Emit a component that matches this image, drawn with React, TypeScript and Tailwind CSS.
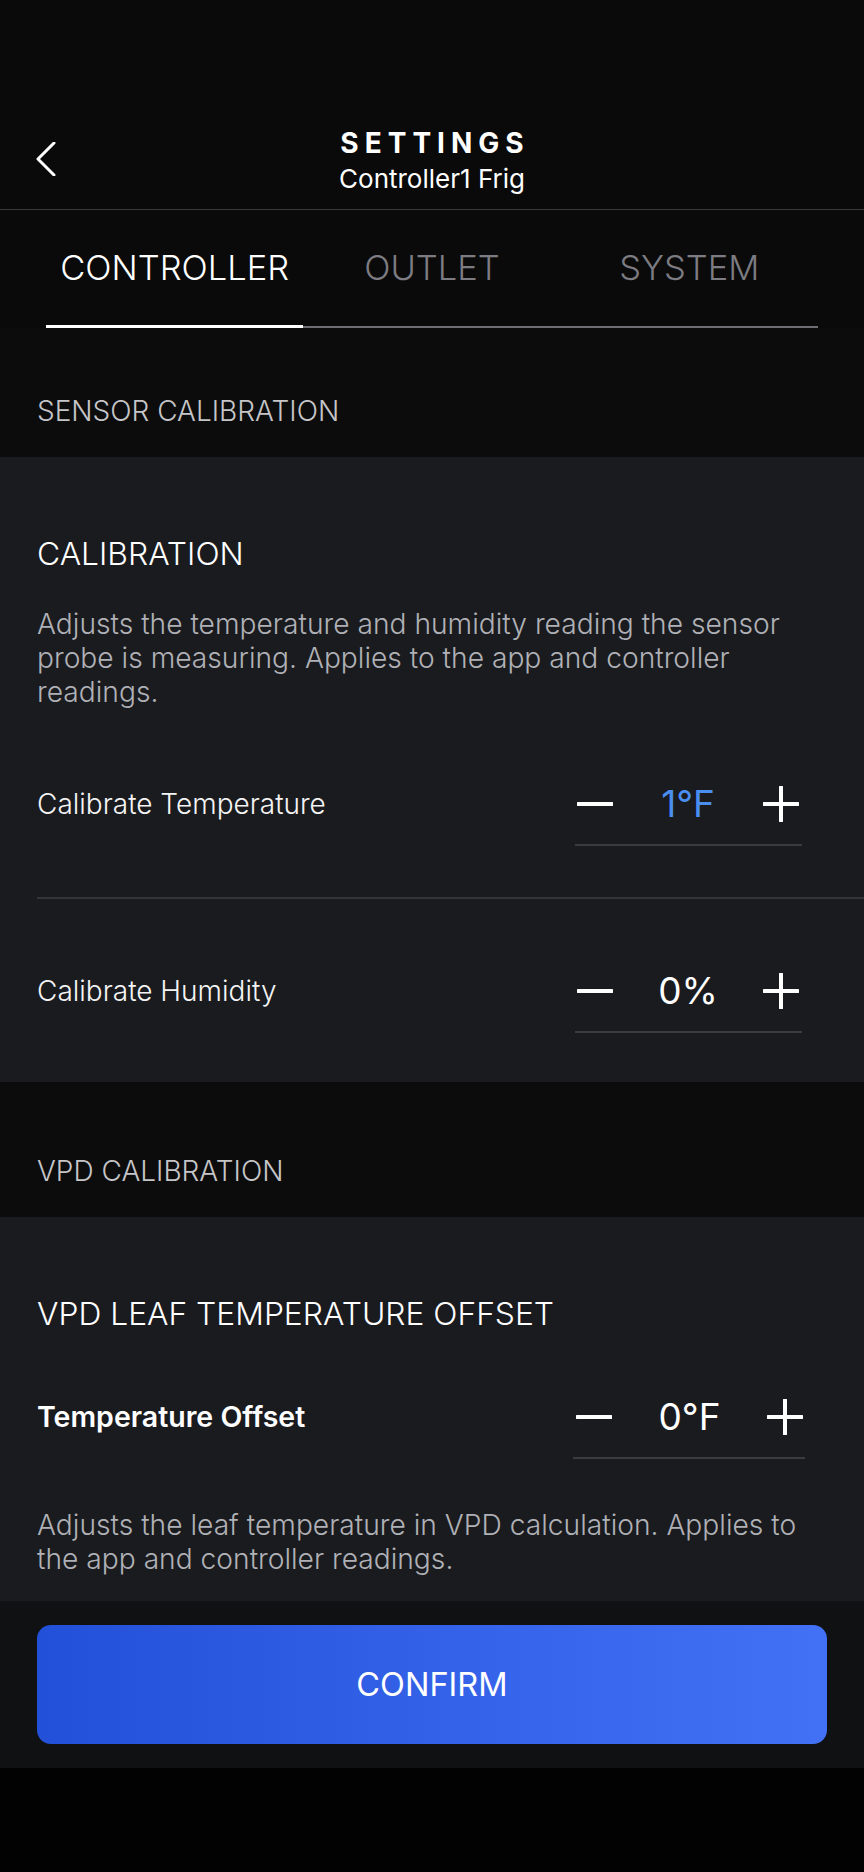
import React from "react";

function Minus() {
  return (
    <svg width="36" height="36" viewBox="0 0 36 36" className="block">
      <line x1="1" y1="18" x2="35" y2="18" stroke="#ffffff" strokeWidth="4" strokeLinecap="round" />
    </svg>
  );
}

function Plus() {
  return (
    <svg width="36" height="36" viewBox="0 0 36 36" className="block">
      <line x1="1" y1="18" x2="35" y2="18" stroke="#ffffff" strokeWidth="4" strokeLinecap="round" />
      <line x1="18" y1="1" x2="18" y2="35" stroke="#ffffff" strokeWidth="4" strokeLinecap="round" />
    </svg>
  );
}

function Stepper({ value, blue, wide }: { value: string; blue?: boolean; wide?: boolean }) {
  return (
    <div className={wide ? "w-[232px] mr-[59px] pb-[20px] border-b-2 border-[#3a3b40]" : "w-[227px] mr-[62px] pb-[20px] border-b-2 border-[#3a3b40]"}>
      <div className={wide ? "flex h-[40px] items-center justify-between pl-[3px] pr-[2px]" : "flex h-[40px] items-center justify-between pl-[2px] pr-[3px]"}>
        <Minus />
        <span
          className={
            blue
              ? "text-[37px] leading-[40px] font-normal text-[#4a8ef0]"
              : "text-[37px] leading-[40px] font-normal text-white"
          }
        >
          {value}
        </span>
        <Plus />
      </div>
    </div>
  );
}

function Row({ label, value, blue, bold, wide }: { label: string; value: string; blue?: boolean; bold?: boolean; wide?: boolean }) {
  return (
    <div className="flex items-start justify-between">
      <span
        className={
          bold
            ? "pl-[37px] text-[28.5px] leading-[40px] font-semibold text-white"
            : "pl-[37px] text-[28px] leading-[40px] font-light text-[#f4f4f4]"
        }
      >
        {label}
      </span>
      <Stepper value={value} blue={blue} wide={wide} />
    </div>
  );
}

export default function App() {
  return (
    <div
      className="w-full min-h-[1872px] bg-[#020202] flex flex-col"
      style={{ fontFamily: "Inter, 'Noto Sans', sans-serif" }}
    >
      {/* Header */}
      <div className="bg-[#0a0a0a]">
        <div className="grid grid-cols-[1fr_auto_1fr] items-center pt-[125px] pb-[12px]">
          <div className="pl-[36px] mb-[4px]">
            <svg width="20" height="34" viewBox="0 0 20 34" className="block">
              <polyline points="18,1 2,17 18,33" fill="none" stroke="#ffffff" strokeWidth="3" strokeLinecap="round" strokeLinejoin="round" />
            </svg>
          </div>
          <div className="flex flex-col items-center">
            <span className="text-[28px] leading-[36px] font-bold tracking-[6px] pl-[6px] text-white">SETTINGS</span>
            <span className="text-[26px] leading-[36px] font-normal text-white">Controller1 Frig</span>
          </div>
          <div />
        </div>
        <div className="h-px bg-[#3a3a3c]" />
        {/* Tabs */}
        <div className="mx-[46px] pt-[38px]">
          <div className="flex pb-[37px]">
            <span className="flex-1 text-center text-[34.5px] leading-[40px] font-light text-white">CONTROLLER</span>
            <span className="flex-1 text-center text-[34.5px] leading-[40px] font-light text-[#7c7c82]">OUTLET</span>
            <span className="flex-1 text-center text-[34.5px] leading-[40px] font-light text-[#7c7c82]">SYSTEM</span>
          </div>
          <div className="flex items-end h-[3px]">
            <div className="flex-1 h-[3px] bg-white" />
            <div className="flex-[2] h-[2px] bg-[#6e6e74]" />
          </div>
        </div>
      </div>

      {/* Section header 1 */}
      <div className="bg-[#0c0c0d] px-[37px] pt-[67px] pb-[30px]">
        <span className="block text-[28px] leading-[32px] font-light text-[#c6c6c8]">SENSOR CALIBRATION</span>
      </div>

      {/* Card 1 */}
      <div className="bg-[#1a1b1f] pt-[77px] pb-[49px]">
        <div className="px-[37px]">
          <div className="text-[31.8px] leading-[40px] font-light text-white">CALIBRATION</div>
          <p className="mt-[33px] text-[28.2px] leading-[34px] font-light text-[#b0b1b6]">
            Adjusts the temperature and humidity reading the sensor probe is measuring. Applies to the app and controller readings.
          </p>
        </div>
        <div className="mt-[75px]">
          <Row label="Calibrate Temperature" value="1°F" blue />
        </div>
        <div className="mt-[51px] ml-[37px] h-[2px] bg-[#34353a]" />
        <div className="mt-[72px]">
          <Row label="Calibrate Humidity" value="0%" />
        </div>
      </div>

      {/* Section header 2 */}
      <div className="bg-[#0c0c0d] px-[37px] pt-[73px] pb-[30px]">
        <span className="block text-[28px] leading-[32px] font-light text-[#c6c6c8]">VPD CALIBRATION</span>
      </div>

      {/* Card 2 */}
      <div className="bg-[#1a1b1f] pt-[77px] pb-[25px]">
        <div className="px-[37px]">
          <div className="text-[31.8px] leading-[40px] font-light text-white">VPD LEAF TEMPERATURE OFFSET</div>
        </div>
        <div className="mt-[63px]">
          <Row label="Temperature Offset" value="0°F" bold wide />
        </div>
        <p className="mt-[49px] px-[37px] text-[28.2px] leading-[34px] font-light text-[#b0b1b6]">
          Adjusts the leaf temperature in VPD calculation. Applies to the app and controller readings.
        </p>
      </div>

      {/* Bottom panel */}
      <div className="bg-[#101113] px-[37px] pt-[24px] pb-[24px]">
        <button className="w-full h-[119px] rounded-[14px] bg-gradient-to-r from-[#2350d8] to-[#4371f6] flex items-center justify-center">
          <span className="text-[32.5px] leading-[40px] font-normal text-white">CONFIRM</span>
        </button>
      </div>
    </div>
  );
}
